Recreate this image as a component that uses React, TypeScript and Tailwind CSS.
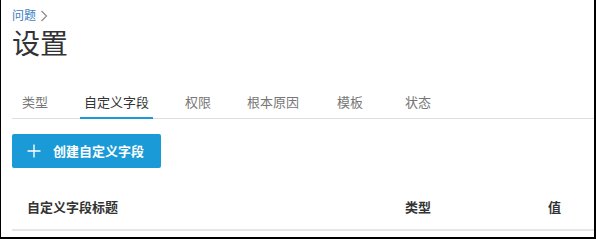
import React from "react";

const tabs: { label: string; active?: boolean; extra: string }[] = [
  { label: "类型", extra: "" },
  { label: "自定义字段", active: true, extra: "" },
  { label: "权限", extra: "" },
  { label: "根本原因", extra: "" },
  { label: "模板", extra: "ml-[2px]" },
  { label: "状态", extra: "ml-[6px]" },
];

export default function App() {
  return (
    <div className="w-[596px] h-[239px] bg-white border-l border-r-2 border-b-2 border-black overflow-hidden font-['Noto_Sans_CJK_SC','Noto_Sans',sans-serif]">
      <div className="pl-[11px] pt-[7px]">
        <div className="flex items-center gap-[4px] h-[16px] text-[12px] leading-[16px] text-[#3b7ec3]">
          <span>问题</span>
          <svg width="8" height="12" viewBox="0 0 8 12" className="mt-[1px]">
            <path d="M1.5 1 L6.5 6 L1.5 11" fill="none" stroke="#8a8a8a" strokeWidth="1.2" />
          </svg>
        </div>
        <div className="mt-[5px] text-[28px] leading-[28px] text-[#333333]">设置</div>
        <div className="mt-[37px] flex gap-[28px] pl-[6px] border-b border-[#dedede]">
          {tabs.map((t) => (
            <div
              key={t.label}
              className={
                t.active
                  ? "px-1 pb-[6px] text-[13px] leading-[18px] text-[#333333] border-b-2 border-[#1a9ad6] -mb-px " + t.extra
                  : "px-1 pb-[6px] text-[13px] leading-[18px] text-[#777777] border-b-2 border-transparent -mb-px " + t.extra
              }
            >
              {t.label}
            </div>
          ))}
        </div>
        <div className="mt-[15px] h-[34px] w-[149px] bg-[#1a9ad6] rounded-[2px] flex items-center pl-[15px] gap-[12px]">
          <svg width="14" height="14" viewBox="0 0 14 14">
            <path d="M7 0.5 V13.5 M0.5 7 H13.5" fill="none" stroke="#ffffff" strokeWidth="1.4" />
          </svg>
          <span className="text-[13px] leading-[18px] font-bold text-white">创建自定义字段</span>
        </div>
        <div className="mt-[16px] h-[47px] flex items-center border-b-2 border-[#e6e6e6] text-[13px] leading-[18px] font-bold text-[#333333]">
          <div className="w-[393px] pl-[15px]">自定义字段标题</div>
          <div className="w-[143px]">类型</div>
          <div>值</div>
        </div>
      </div>
    </div>
  );
}
